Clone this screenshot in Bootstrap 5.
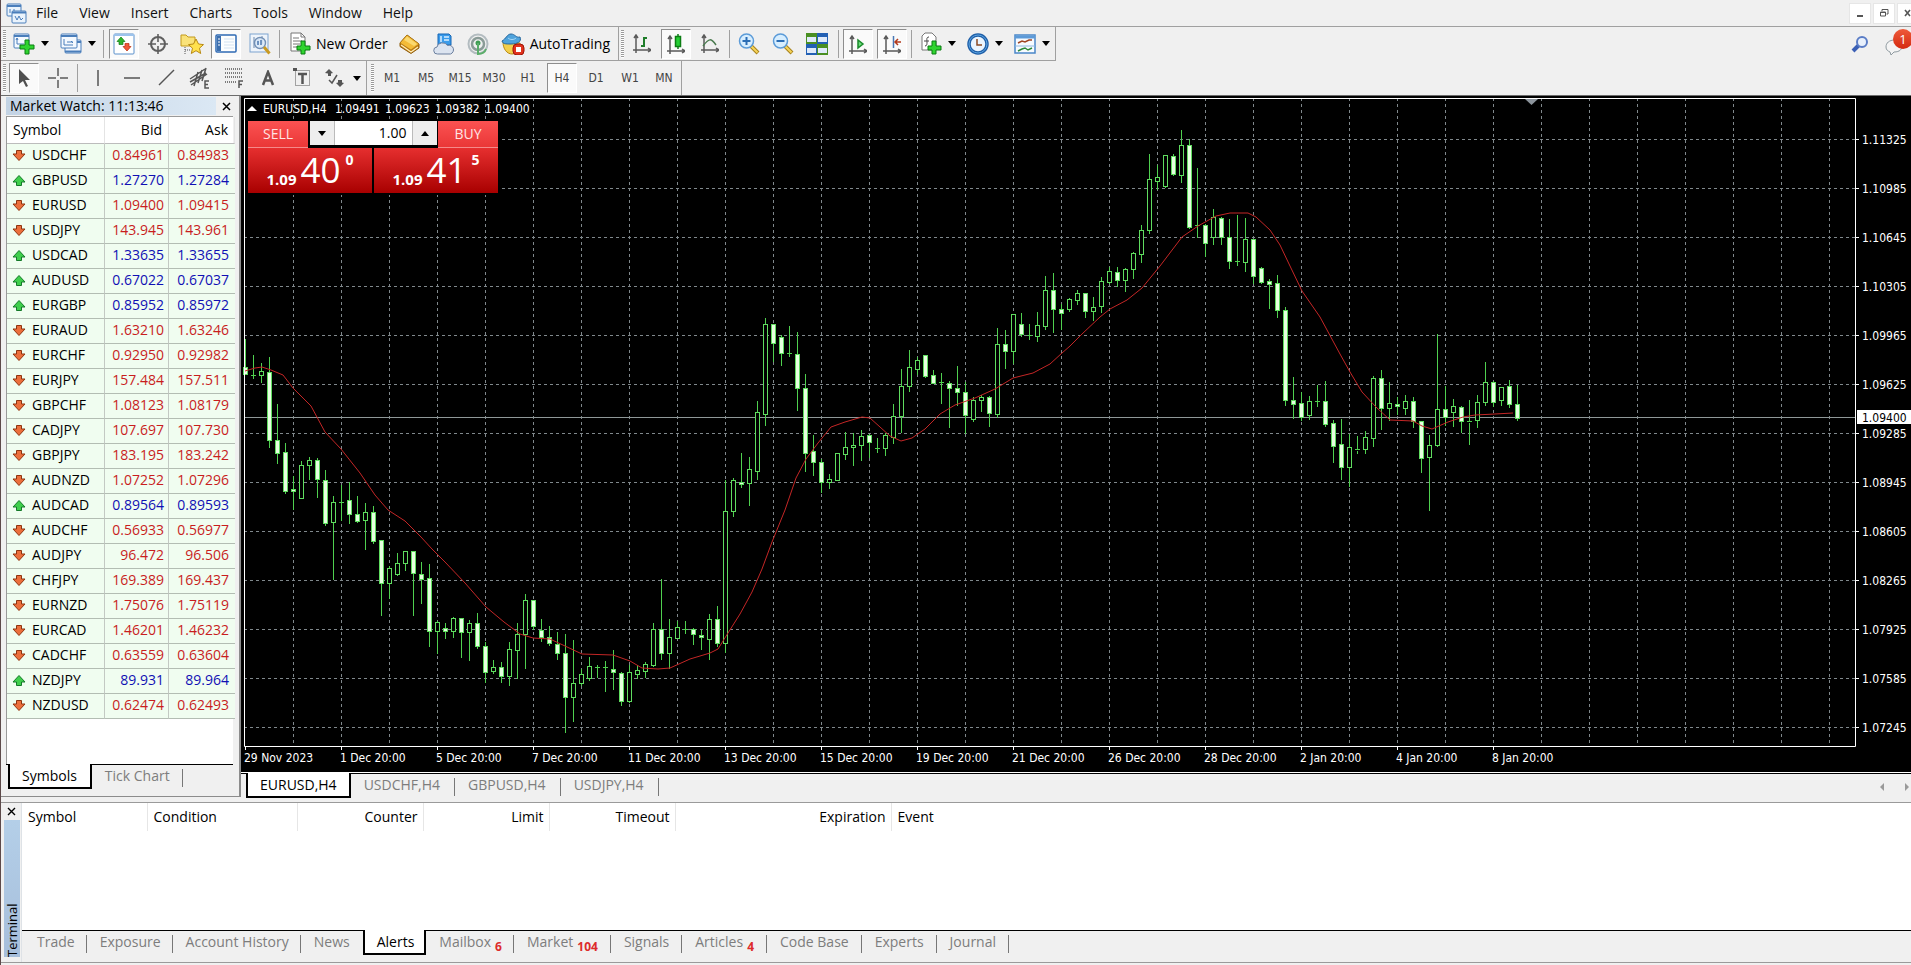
<!DOCTYPE html>
<html lang="en">
<head>
<meta charset="utf-8">
<meta name="viewport" content="width=device-width, initial-scale=1">
<title>EURUSD,H4</title>
<link href="https://cdn.jsdelivr.net/npm/bootstrap@5.3.0/dist/css/bootstrap.min.css" rel="stylesheet">
<style>
  :root { --ui: "Open Sans", "Noto Sans", sans-serif; --tick: "DejaVu Sans Condensed", "Noto Sans", sans-serif; --face: #f0f0f0; --edge: #a0a0a0; }
  body { font: 14px/20px var(--ui); background: var(--face); color: #000; border-left: 1px solid #5d4a4a; overflow: hidden; }
  button, input { font-family: inherit; }
  button { border: 0; background: none; padding: 0; color: inherit; }
  svg { display: block; flex: none; }

  .menubar { height: 27px; border-bottom: 1px solid var(--edge); padding-left: 5px; }
  .menubar a { color: #111; text-decoration: none; margin-left: 21px; }
  .menubar a.first { margin-left: 8px; }
  .mdi button { width: 22px; height: 21px; background: #fff; margin-left: 2px; border: 1px solid #e6e6e6; }
  .mdi { margin-right: -8px; }

  .tools { height: 34px; }
  .strip { height: 34px; border-right: 1px solid var(--edge); border-bottom: 1px solid var(--edge); }
  .strip.open { border-bottom: 0; }
  .strip.main { padding-right: 5px; }
  .grip { width: 3px; height: 28px; margin: 0 1px 0 2px; background: repeating-linear-gradient(#9a9a9a 0 1px, #fff 1px 2px); }
  .tb { width: 30px; height: 30px; margin: 0 2px; display: flex; align-items: center; justify-content: center; flex: none; }
  .tb.on { background: #fafafa; border: 1px solid #fff; border-top-color: #8e8e8e; border-left-color: #8e8e8e; }
  .tb.drop { width: 43px; justify-content: space-between; padding: 0 3px 0 4px; }
  .tb.wide { width: auto; gap: 5px; padding: 0 1px 0 4px; font-size: 14px; }
  .tb.frame { font: 12px var(--tick); color: #444; }
  .caret { width: 0; border: 4px solid transparent; border-top: 5px solid #000; border-bottom: 0; }
  .bar { width: 1px; height: 28px; background: var(--edge); margin: 0 3px 0 2px; }
  .bar.slim { margin-right: 2px; }
  .notes { margin-right: -2px; }
  .bell { width: 28px; height: 30px; position: relative; }
  .bell span { position: absolute; right: 0; top: 0; width: 20px; height: 20px; border-radius: 50%; background: linear-gradient(#ee5a3a, #d42a10); color: #fff; font-size: 13px; line-height: 20px; }

  .work { border-top: 1px solid #6c6c6c; }
  .watch { width: 240px; flex: none; padding: 1px 6px 0 5px; border-right: 2px solid #8c8c8c; border-bottom: 1px solid #8c8c8c; }
  .watch-title { height: 19px; line-height: 17px; margin-right: -5px; }
  .watch-title span { background: linear-gradient(90deg, #c3d3e4, #dbe8f4); padding-left: 4px; height: 18px; }
  .watch-title button { width: 22px; }
  .box { background: #fff; border-left: 1px solid #9a9a9a; border-top: 1px solid #9a9a9a; }
  .quotes { table-layout: fixed; width: 228px; border-collapse: separate; border-spacing: 0; }
  .quotes th { font-weight: 400; height: 27px; padding: 0 6px; border-right: 1px solid #e4e4e4; border-bottom: 1px solid #bcbcbc; line-height: 20px; }
  .quotes td { height: 25px; line-height: 20px; padding: 0 4px 3px; border-right: 1px solid #c3c9c3; border-bottom: 1px solid #b3bdb3; background: #f0fdf0; }
  .quotes td.num, .quotes th.num { text-align: right; }
  .quotes td:last-child { padding-right: 6px; border-right: 0; }
  .quotes .pair { display: flex; align-items: center; gap: 6px; padding-left: 1px; height: 21px; }
  .down { color: #c81e1e; } .up { color: #1010b4; }

  .tabs { display: flex; border-top: 1px solid #000; height: 24px; padding-left: 5px; color: #7d7d7d; }
  .tabs.in { padding-left: 2px; }
  .tabs button { padding: 0 12px 1px 13px; position: relative; height: 23px; white-space: nowrap; }
  .tabs button::after { content: ""; position: absolute; right: 0; top: 4px; height: 18px; border-right: 1px solid #777; }
  .tabs button.on { color: #000; background: #fff; border: 0 solid #000; border-width: 0 2px 2px; margin-top: -1px; padding-bottom: 0; height: 25px; padding-left: 12px; }
  .tabs button.on::after, .tabs button.prev::after { display: none; }
  .tabs b { color: #dd2b2b; font-size: 12px; position: relative; top: 4px; margin-left: 4px; }
  .charts-row button:not(.on) { padding-right: 15px; }
  .term-row button:nth-child(n+7), .term-row button.prev, .watch .tabs button { padding-right: 13px; }
  .term-row button.on { padding-right: 10px; }

  .chart-pane { background: #000; min-width: 0; }
  .chart-pane > svg { width: 100%; height: 100%; }
  .chart-pane text { font: 12px var(--tick); fill: #fff; }
  .trade { position: absolute; left: 7px; top: 25px; width: 250px; color: #fff; }
  .trade button.side { width: 60px; height: 27px; background: linear-gradient(#fb5252, #ea3737); color: #ffe4e4; border-bottom: 1px solid #f58a8a; }
  .spin { width: 127px; height: 24px; background: #eee; }
  .spin button { width: 24px; display: flex; align-items: center; justify-content: center; }
  .spin input { width: 79px; border: 0; border-left: 1px solid #bbb; border-right: 1px solid #bbb; text-align: right; padding: 0 5px; line-height: 24px; outline: 0; }
  .caret.rise { transform: rotate(180deg); }
  .price { width: 124px; height: 45px; background: linear-gradient(#e62f2f, #a80000); display: flex; justify-content: center; align-items: flex-end; gap: 4px; padding-bottom: 4px; }
  .price b { font-size: 15px; line-height: 20px; }
  .price span { font-size: 35px; line-height: 38px; }
  .price b.pip { align-self: flex-start; font-size: 14px; line-height: 24px; margin-left: 1px; }

  .foot-tabs { background: var(--face); border-top: 1px solid #fff; }
  .terminal { border-top: 1px solid #9a9a9a; margin-top: 5px; }
  .side-title { width: 20px; background: var(--face); padding: 0 1px 5px 3px; flex: none; }
  .side-title button { height: 17px; line-height: 12px; }
  .side-title div { background: linear-gradient(#a6bedb, #b4cfe8); writing-mode: vertical-rl; transform: rotate(180deg); font-size: 13px; line-height: 16px; }
  .alerts { table-layout: fixed; width: 100%; }
  .alerts th { font-weight: 400; height: 28px; padding: 0 5px 0 6px; border-right: 1px solid #e6e6e6; }
  .alerts th:last-child { border: 0; }
  .term-body { height: 127px; }
  .term-row { background: var(--face); height: 32px; }
  .status { height: 3px; border-top: 1px solid #9a9a9a; }
</style>
</head>
<body class="vh-100 d-flex flex-column">

<nav class="menubar d-flex align-items-center">
  <svg width="22" height="22" viewBox="0 0 22 22" fill="#eaf3fc" stroke="#4a7ebb"><rect x="1" y="2" width="14" height="12" rx="1"/><path d="M1 4h14" stroke-width="2"/><path d="M4 7v4M8 7v3" /><rect x="6" y="9" width="14" height="12" rx="1"/><path d="M6 10.500h14" stroke-width="2"/><path d="M9 14l2 4 2-4 2 4 2-2" fill="none"/></svg>
  <a class="first" href="#">File</a><a href="#">View</a><a href="#">Insert</a><a href="#">Charts</a><a href="#">Tools</a><a href="#">Window</a><a href="#">Help</a>
  <div class="mdi d-flex ms-auto">
    <button aria-label="Minimize"><svg class="mx-auto" width="12" height="12"><path d="M3 9h6" stroke="#555" stroke-width="2"/></svg></button>
    <button aria-label="Restore"><svg class="mx-auto" width="12" height="12" fill="none" stroke="#555"><path d="M4 4V2.500h6V7H8.500M2.500 5h5v4h-5zM2 5.500h6"/></svg></button>
    <button aria-label="Close"><svg class="mx-auto" width="12" height="12"><path d="M3 3l5 6M8 3l-5 6" stroke="#555" stroke-width="1.600"/></svg></button>
  </div>
</nav>

<div class="tools d-flex">
  <div class="strip main d-flex align-items-center">
    <div class="grip"></div>
    <button class="tb drop" aria-label="New chart"><svg width="22" height="22" viewBox="0 0 22 22"><rect x="1" y="1" width="15" height="14" rx="1" fill="#f4f9ff" stroke="#4a7ebb"/><path d="M1 3h15" stroke="#4a7ebb" stroke-width="2"/><path d="M4 5v6h7M3 7l1-2 1 2" fill="none" stroke="#4a7ebb"/><path d="M12 7h4v5h5v4h-5v5h-4v-5H7v-4h5z" fill="#2fd42f" stroke="#0b7d12"/></svg><i class="caret"></i></button>
    <button class="tb drop" aria-label="Profiles"><svg width="22" height="22" viewBox="0 0 22 22" fill="#f4f9ff" stroke="#4a7ebb"><rect x="5" y="7" width="16" height="13" rx="1"/><path d="M5 9h16M5 18.500h16" stroke-width="2"/><rect x="1" y="1" width="16" height="14" rx="1"/><path d="M1 3h16" stroke-width="2"/><path d="M4 6v6h9M11 8l2 2M7 9h6" fill="none"/></svg><i class="caret"></i></button>
    <div class="bar"></div>
    <button class="tb on" aria-label="Market Watch"><svg width="22" height="22" viewBox="0 0 22 22"><rect x="1" y="1" width="20" height="20" rx="1" fill="#fff" stroke="#5b90cb"/><path d="M1 2h20" stroke="#9cc3ec" stroke-width="2"/><path d="M8 4l4 4.500-2 0v3H6v-3H4z" fill="#2fb52f" stroke="#127d12" stroke-width=".7"/><path d="M14 18l-4-4.500h2v-3h4v3h2z" fill="#f05a38" stroke="#b8290c" stroke-width=".7"/></svg></button>
    <button class="tb" aria-label="Data Window"><svg width="20" height="20" viewBox="0 0 20 20" fill="none" stroke="#5f5f5f" stroke-width="2"><circle cx="10" cy="10" r="7"/><path d="M10 0v8M10 12v8M0 10h8M12 10h8" stroke-width="1.600"/></svg></button>
    <button class="tb" aria-label="Navigator"><svg width="24" height="22" viewBox="0 0 24 22"><path d="M1 2h5l2 2h7v9H1z" fill="#f9e27a" stroke="#c39a1d"/><path d="M5 14v7M5 17h5" stroke="#555" stroke-dasharray="1 1"/><path d="M16 6l2.500 5 5 .600-4 3.600 1.200 5.300-4.700-2.800-4.700 2.800 1.200-5.300-4-3.600 5-.600z" fill="#ffe14d" stroke="#b98a14"/></svg></button>
    <button class="tb on" aria-label="Terminal"><svg width="22" height="20" viewBox="0 0 22 20"><rect x="1" y="1" width="20" height="17" rx="1" fill="#fdfefe" stroke="#2e69b4" stroke-width="1.500"/><path d="M2 2h4v15H2z" fill="#3c6fae"/><path d="M9 5h10M9 8h10M9 11h10M9 14h10" stroke="#d3e2f1"/><path d="M3 5h2M3 8h2M3 11h2" stroke="#fff"/></svg></button>
    <button class="tb" aria-label="Strategy Tester"><svg width="22" height="22" viewBox="0 0 22 22"><rect x="1" y="1" width="18" height="18" fill="#eef4fb" stroke="#7da3cf"/><path d="M5 4v11M13 3v8M9 6v4" stroke="#6a88ad"/><circle cx="11" cy="10" r="5.500" fill="#d8e9f9" fill-opacity=".8" stroke="#7390b5" stroke-width="1.400"/><path d="M9 8v4M12 7v5" stroke="#4d78b0" stroke-width="1.500"/><path d="M15 14l5.500 6.500" stroke="#c99a22" stroke-width="3"/></svg></button>
    <div class="bar"></div>
    <button class="tb wide"><svg width="22" height="23" viewBox="0 0 22 23"><path d="M2 1h10l4 4v14H2z" fill="#fff" stroke="#777"/><path d="M12 1v4h4M4 6h6M4 9h9M4 12h7M4 15h6" fill="none" stroke="#777"/><path d="M12 9h4v5h5v4h-5v4h-4v-4H8v-4h4z" fill="#2fd42f" stroke="#0b7d12"/></svg>New Order</button>
    <button class="tb ms-1" aria-label="MetaEditor"><svg width="22" height="20" viewBox="0 0 22 20"><path d="M8 1l12 9v4l-8 5.500L1 12.500V9z" fill="#c07c12" stroke="#8f5c0b"/><path d="M8 1l12 9-8 6L1 9z" fill="#f3bb38" stroke="#a36d10" stroke-width=".6"/><path d="M2 11l10 7 7-5" fill="none" stroke="#fff0bd" stroke-width="1.200"/><path d="M8 2.500l10 7.500-3 2L5 6z" fill="#fbd970"/></svg></button>
    <button class="tb" aria-label="Virtual Hosting"><svg width="22" height="22" viewBox="0 0 22 22"><path d="M5 1h11l2 2v9H5z" fill="#3a9bea" stroke="#1667b5"/><path d="M8 3v6M11 4h5M11 7h5" stroke="#d9eeff" stroke-width="1.500"/><path d="M4.500 21a3.500 3.500 0 01-.5-7 5.500 4.500 0 0110.500-1.500 4.200 4.200 0 013 8.500z" fill="#dce4f0" stroke="#6b7f9e"/></svg></button>
    <button class="tb" aria-label="Signals"><svg width="22" height="22" viewBox="0 0 22 22" fill="none"><circle cx="11" cy="11" r="9.500" stroke="#b3bcc0" stroke-width="2"/><circle cx="11" cy="11" r="6" stroke="#8a9b97" stroke-width="2.500"/><circle cx="11" cy="10" r="2.500" fill="#3f9c52"/><path d="M11 10v11c4 0 7-2 8-5" stroke="#5aae69" stroke-width="2"/></svg></button>
    <button class="tb wide"><svg width="24" height="22" viewBox="0 0 24 22"><path d="M2 9c0 7 4 12 9 12 4 0 8-4 8-11z" fill="#f3cf4c" stroke="#b98a14"/><path d="M1 8c4-2 5-7 9-7s5 4 9 3c2 5-3 7-9 7S2 11 1 8z" fill="#4fa3dc" stroke="#27679d"/><path d="M7 5c2 2 6 2 8 0" stroke="#a9d8f5" fill="none"/><rect x="12" y="11" width="11" height="11" rx="4" fill="#e2321d" stroke="#9d1608"/><rect x="15" y="14" width="5" height="5" fill="#fff"/></svg>AutoTrading</button>
  </div>
  <div class="strip d-flex align-items-center">
    <div class="grip"></div>
    <button class="tb" aria-label="Bar Chart"><svg width="18" height="20" viewBox="0 0 18 20" fill="none" stroke="#5a5a5a" stroke-width="1.500"><path d="M3 2v17M0 16h17M1 4l2-3 2 3M15 14l3 2-3 2"/><path d="M11 3v10M11 4h3M8 12h3" stroke="#1f7d2a" stroke-width="2"/></svg></button>
    <button class="tb on" aria-label="Candlesticks"><svg width="18" height="20" viewBox="0 0 18 20" fill="none" stroke="#5a5a5a" stroke-width="1.500"><path d="M3 3v17M0 17h17M1 5l2-3 2 3M15 15l3 2-3 2"/><path d="M11 0v15" stroke="#0c7d14"/><rect x="8.500" y="2.500" width="5" height="10" fill="#24cf33" stroke="#0c7d14"/></svg></button>
    <button class="tb" aria-label="Line Chart"><svg width="18" height="20" viewBox="0 0 18 20" fill="none" stroke="#5a5a5a" stroke-width="1.500"><path d="M3 2v17M0 16h17M1 4l2-3 2 3M15 14l3 2-3 2"/><path d="M2 12c6-8 8-8 13-1" stroke="#4a7a4f"/></svg></button>
    <div class="bar slim"></div>
    <button class="tb" aria-label="Zoom In"><svg width="22" height="22" viewBox="0 0 22 22"><path d="M13 13l7 7" stroke="#a8831c" stroke-width="4"/><path d="M13 13l6.500 6.500" stroke="#f7d55a" stroke-width="2"/><circle cx="8.500" cy="8" r="7" fill="#d7eeff" stroke="#5b9bd8" stroke-width="1.500"/><path d="M4.500 8h8M8.500 4v8" stroke="#2a6db5" stroke-width="2"/></svg></button>
    <button class="tb" aria-label="Zoom Out"><svg width="22" height="22" viewBox="0 0 22 22"><path d="M13 13l7 7" stroke="#a8831c" stroke-width="4"/><path d="M13 13l6.500 6.500" stroke="#f7d55a" stroke-width="2"/><circle cx="8.500" cy="8" r="7" fill="#d7eeff" stroke="#5b9bd8" stroke-width="1.500"/><path d="M4.500 8h8" stroke="#2a6db5" stroke-width="2"/></svg></button>
    <button class="tb" aria-label="Tile Windows"><svg width="22" height="22" viewBox="0 0 22 22"><path d="M0 0h11v11H0zM11 11h11v11H11z" fill="#4a8f22"/><path d="M11 0h11v11H11zM0 11h11v11H0z" fill="#2260b4"/><path d="M1 4h9v5H1zM12 4h9v5h-9zM1 15h9v5H1zM12 15h9v5h-9z" fill="#dfeafa"/></svg></button>
    <div class="bar slim ms-1"></div>
    <button class="tb on" aria-label="Auto Scroll"><svg width="18" height="20" viewBox="0 0 18 20" fill="none" stroke="#5a5a5a" stroke-width="1.500"><path d="M3 3v17M0 17h17M1 5l2-3 2 3M15 15l3 2-3 2"/><path d="M9 6v8l5-4z" fill="#6fe07c" stroke="#1a8a2b"/></svg></button>
    <button class="tb on" aria-label="Chart Shift"><svg width="18" height="20" viewBox="0 0 18 20" fill="none" stroke="#5a5a5a" stroke-width="1.500"><path d="M3 3v17M0 17h17M1 5l2-3 2 3M15 15l3 2-3 2"/><path d="M10.500 2v12" stroke="#4a78b5"/><path d="M18 8h-5M15 5l-3 3 3 3" stroke="#b33a1c"/></svg></button>
    <div class="bar slim"></div>
    <button class="tb drop" aria-label="Indicators"><svg width="22" height="23" viewBox="0 0 22 23"><path d="M5 1h7l4 4v13H2V4z" fill="#fff" stroke="#777"/><path d="M9 5c-3 0-2 3-2 5s0 4-2 4M4 9h5" fill="none" stroke="#444"/><path d="M12 9h4v5h5v4h-5v4h-4v-4H8v-4h4z" fill="#2fd42f" stroke="#0b7d12"/></svg><i class="caret"></i></button>
    <button class="tb drop" aria-label="Periods"><svg width="22" height="22" viewBox="0 0 22 22"><circle cx="11" cy="11" r="9" fill="#eaf5ff" stroke="#1f5fa8" stroke-width="3.500"/><circle cx="11" cy="11" r="9" fill="none" stroke="#5ea5e2"/><path d="M10 6v6h5" fill="none" stroke="#8b4a24" stroke-width="1.500"/></svg><i class="caret"></i></button>
    <button class="tb drop" aria-label="Templates"><svg width="22" height="20" viewBox="0 0 22 20"><rect x="1" y="1" width="20" height="18" fill="#f7fbff" stroke="#4a86c8" stroke-width="1.500"/><path d="M1 3h20" stroke="#5c9ad8" stroke-width="3"/><path d="M1 12h20" stroke="#8fb8e2"/><path d="M4 9l4-2 3 1 4-2h3" fill="none" stroke="#a04524" stroke-width="1.500"/><path d="M4 17l4-2 3-1 3 2 4-2" fill="none" stroke="#2c8a3a" stroke-width="1.500"/></svg><i class="caret"></i></button>
  </div>
  <div class="notes d-flex align-items-center ms-auto gap-3">
    <button aria-label="Search"><svg width="18" height="18" viewBox="0 0 18 18" fill="none"><path d="M2 16l6-6" stroke="#3b5fb5" stroke-width="4"/><circle cx="11" cy="7" r="5" stroke="#5a7cc6" stroke-width="2" fill="#e8f0fc"/></svg></button>
    <button class="bell" aria-label="Messages"><svg width="26" height="30" viewBox="0 0 26 30"><path d="M10 11c-6 0-9 3-9 7 0 3 2 4 4 5l1 3 3-3c6 0 8-3 8-6" fill="#f4f4f4" stroke="#8f9aa0"/></svg><span>1</span></button>
  </div>
</div>

<div class="tools d-flex">
  <div class="strip open d-flex align-items-center">
    <div class="grip"></div>
    <button class="tb on" aria-label="Cursor"><svg width="14" height="20" viewBox="0 0 14 20"><path d="M2 1v15l4-3 3 6 2-1-3-6h5z" fill="#4f4f4f"/></svg></button>
    <button class="tb" aria-label="Crosshair"><svg width="20" height="20" stroke="#5a5a5a" stroke-width="1.500"><path d="M10 0v8M10 12v8M0 10h8M12 10h8"/></svg></button>
    <div class="bar"></div>
    <button class="tb" aria-label="Vertical Line"><svg width="20" height="20" stroke="#555" stroke-width="1.500"><path d="M10 2v16"/></svg></button>
    <button class="tb" aria-label="Horizontal Line"><svg width="20" height="20" stroke="#555" stroke-width="1.500"><path d="M2 10h16"/></svg></button>
    <button class="tb" aria-label="Trendline"><svg width="20" height="20" stroke="#555" stroke-width="1.500"><path d="M3 17L18 2"/></svg></button>
    <button class="tb" aria-label="Equidistant Channel"><svg width="22" height="22" viewBox="0 0 22 22" stroke="#555" stroke-width="1.500" fill="none"><path d="M1 12L16 2M2 18L18 7M5 19L9 5M9 16l4-13M13 14l4-13M1 15l16-9"/><path d="M20 14h-4v7h4M16 17.500h3"/></svg></button>
    <button class="tb" aria-label="Fibonacci Retracement"><svg width="20" height="22" viewBox="0 0 20 22" stroke="#555" fill="none"><path d="M1 2h17M1 6h17M1 10h17M1 15h12" stroke-dasharray="1 1" stroke-width="1.500"/><path d="M19 14h-4v7M15 17.500h3" stroke-width="1.500"/></svg></button>
    <button class="tb" aria-label="Text"><svg width="14" height="16" viewBox="0 0 14 16" fill="none" stroke="#555" stroke-width="2.500"><path d="M2 15L7 2l5 13M4 10.500h6"/></svg></button>
    <button class="tb" aria-label="Text Label"><svg width="20" height="20" viewBox="0 0 20 20" fill="none" stroke="#555"><rect x="3.500" y="2.500" width="14" height="15" stroke-dasharray="1 1"/><path d="M6 6h9M10.500 6v10" stroke-width="2.500"/><path d="M1 0h4v3H1z" fill="#555" stroke="none"/></svg></button>
    <button class="tb drop" aria-label="Arrows"><svg width="20" height="18" viewBox="0 0 20 18"><path d="M4 0l4 4-2 .500V7H3V4.500L0 4z" fill="#555"/><path d="M15 18l-4-4 2-.500V11h4v2.500l2 .500z" fill="#555"/><path d="M4 11l3 3 5-8" fill="none" stroke="#555" stroke-width="1.500"/></svg><i class="caret"></i></button>
  </div>
  <div class="strip open d-flex align-items-center">
    <div class="grip ms-1"></div>
    <button class="tb frame">M1</button><button class="tb frame">M5</button><button class="tb frame">M15</button><button class="tb frame">M30</button><button class="tb frame">H1</button><button class="tb frame on">H4</button><button class="tb frame">D1</button><button class="tb frame">W1</button><button class="tb frame">MN</button>
  </div>
</div>

<main class="work d-flex flex-grow-1">
  <aside class="watch d-flex flex-column">
    <div class="watch-title d-flex"><span class="flex-grow-1">Market Watch: 11:13:46</span><button aria-label="Close Market Watch"><svg class="mx-auto" width="10" height="10"><path d="M1 1l7 7M8 1L1 8" stroke="#000" stroke-width="1.500"/></svg></button></div>
    <div class="box flex-grow-1">
      <table class="quotes">
        <colgroup><col style="width:98px"><col style="width:64px"><col></colgroup>
        <thead><tr><th>Symbol</th><th class="num">Bid</th><th class="num">Ask</th></tr></thead>
        <tbody id="quotes"></tbody>
      </table>
    </div>
    <div class="tabs in mb-2"><button class="on">Symbols</button><button>Tick Chart</button></div>
  </aside>

  <section class="flex-grow-1 d-flex flex-column" style="min-width:0">
    <div class="chart-pane position-relative flex-grow-1">
      <svg id="chart" role="img" aria-label="EURUSD four-hour candlestick chart"></svg>
      <div class="trade">
        <div class="d-flex justify-content-between align-items-start position-relative">
          <button class="side">SELL</button>
          <div class="spin d-flex"><button aria-label="Less volume"><i class="caret"></i></button><input aria-label="Volume" value="1.00"><button aria-label="More volume"><i class="caret rise"></i></button></div>
          <button class="side">BUY</button>
        </div>
        <div class="d-flex justify-content-between">
          <button class="price"><b>1.09</b><span>40</span><b class="pip">0</b></button>
          <button class="price"><b>1.09</b><span>41</span><b class="pip">5</b></button>
        </div>
      </div>
    </div>
    <div class="foot-tabs"><div class="tabs charts-row"><button class="on">EURUSD,H4</button><button>USDCHF,H4</button><button>GBPUSD,H4</button><button>USDJPY,H4</button>
      <svg class="ms-auto mt-2" width="34" height="10" fill="#9a9a9a"><path d="M7 1v8L3 5zM28 1v8l4-4z"/></svg></div></div>
  </section>
</main>

<section class="terminal d-flex bg-white">
  <div class="side-title d-flex flex-column"><button aria-label="Close Terminal"><svg class="mx-auto" width="10" height="10"><path d="M1 1l7 7M8 1L1 8" stroke="#000" stroke-width="1.400"/></svg></button><div class="flex-grow-1">Terminal</div></div>
  <div class="flex-grow-1 border-start">
    <div class="term-body">
      <table class="alerts">
        <colgroup><col style="width:125px"><col style="width:150px"><col style="width:126px"><col style="width:126px"><col style="width:126px"><col style="width:216px"><col></colgroup>
        <thead><tr><th>Symbol</th><th>Condition</th><th class="text-end">Counter</th><th class="text-end">Limit</th><th class="text-end">Timeout</th><th class="text-end">Expiration</th><th>Event</th></tr></thead>
      </table>
    </div>
    <div class="term-row"><div class="tabs in"><button>Trade</button><button>Exposure</button><button>Account History</button><button class="prev">News</button><button class="on">Alerts</button><button>Mailbox<b>6</b></button><button>Market<b>104</b></button><button>Signals</button><button>Articles<b>4</b></button><button>Code Base</button><button>Experts</button><button>Journal</button></div></div>
  </div>
</section>
<div class="status"></div>

<script src="https://cdn.jsdelivr.net/npm/bootstrap@5.3.0/dist/js/bootstrap.bundle.min.js"></script>
<script>
const quotes = `USDCHF 0.84961 0.84983 d
GBPUSD 1.27270 1.27284 u
EURUSD 1.09400 1.09415 d
USDJPY 143.945 143.961 d
USDCAD 1.33635 1.33655 u
AUDUSD 0.67022 0.67037 u
EURGBP 0.85952 0.85972 u
EURAUD 1.63210 1.63246 d
EURCHF 0.92950 0.92982 d
EURJPY 157.484 157.511 d
GBPCHF 1.08123 1.08179 d
CADJPY 107.697 107.730 d
GBPJPY 183.195 183.242 d
AUDNZD 1.07252 1.07296 d
AUDCAD 0.89564 0.89593 u
AUDCHF 0.56933 0.56977 d
AUDJPY 96.472 96.506 d
CHFJPY 169.389 169.437 d
EURNZD 1.75076 1.75119 d
EURCAD 1.46201 1.46232 d
CADCHF 0.63559 0.63604 d
NZDJPY 89.931 89.964 u
NZDUSD 0.62474 0.62493 d`;
const arrow = {
  d: '<svg width="14" height="14" viewBox="0 0 14 14"><path d="M4.500 2.500h5V6h3.500L7 12.500 1 6h3.500z" fill="#ec6f3c" stroke="#8f3410"/></svg>',
  u: '<svg width="14" height="14" viewBox="0 0 14 14"><path d="M4.500 12.500h5V9h3.500L7 2.500 1 9h3.500z" fill="#3fcf4c" stroke="#14792a"/></svg>'
};
document.getElementById('quotes').innerHTML = quotes.split('\n').map(q => {
  const [s, bid, ask, dir] = q.split(' '), c = dir === 'u' ? 'up' : 'down';
  return `<tr><td><div class="pair">${arrow[dir]}${s}</div></td><td class="num ${c}">${bid}</td><td class="num ${c}">${ask}</td></tr>`;
}).join('');

// Each candle: high, body top, body bottom, low, kind (f = bearish, h = bullish, d = doji).
const candles = `339,367,374,374f 355,375,375,378d 363,371,375,382h 357,372,440,447f 404,440,453,463f 443,452,491,493f 476,489,491,509f 461,465,498,498h 457,460,465,479h 458,460,479,497f
470,480,523,525f 496,502,522,579h 485,502,502,520d 482,500,514,523f 496,514,521,522f 503,512,520,549h 506,512,541,543f 540,540,583,615f 566,568,583,598h 553,563,574,575h
551,551,563,570h 551,551,573,615f 562,574,579,603f 564,578,631,646f 621,622,631,653h 623,628,631,638f 617,618,631,637h 618,618,632,657f 620,623,632,660h 613,623,646,648f
642,646,672,682f 660,667,671,673h 662,667,676,682f 642,649,676,685h 623,634,650,678h 594,600,634,668h 600,600,626,629f 619,630,637,641f 626,637,643,645f 632,644,653,659f
634,653,697,732f 640,683,697,721h 669,674,683,685h 657,666,678,680h 665,667,667,677d 661,667,667,691d 650,669,672,689f 672,673,701,705f 665,672,701,702h 665,670,674,678h
662,664,671,677h 623,629,665,666h 579,629,653,659f 619,637,653,668h 621,627,638,638h 621,629,629,633d 628,629,634,644f 630,635,637,649f 614,619,639,659h 606,619,643,646f
480,511,643,652h 478,480,511,516h 453,482,484,487f 457,469,483,505h 401,412,471,479h 318,324,414,425h 324,324,343,361f 335,337,353,365f 326,353,354,356d 332,354,388,410f
374,388,453,471f 435,451,462,475f 459,462,482,492f 474,479,482,488h 453,453,480,480h 432,447,454,459h 433,445,447,465h 430,436,445,460h 434,435,442,457f 438,448,448,452d
433,435,448,455h 404,416,437,443h 369,386,416,432h 350,367,386,391h 357,360,369,374h 355,355,376,377f 370,375,383,383f 373,382,383,403d 381,383,388,427f 366,388,392,405f
382,392,415,433f 397,400,419,421h 395,397,400,411h 396,397,413,426f 328,344,414,417h 330,344,351,368f 314,314,351,363h 313,324,334,336f 324,335,336,339d 312,325,336,341h
276,290,326,329h 273,290,309,332f 304,309,313,329f 298,299,309,311h 290,293,300,304h 293,293,311,317f 297,307,311,320h 277,281,306,312h 267,271,282,283h 267,272,280,286f
268,269,280,291h 252,253,269,278h 225,230,254,262h 154,179,230,233h 165,177,181,189h 155,155,186,187h 154,156,174,175f 130,145,175,182h 139,145,227,228f 168,225,225,237d
224,225,243,256f 209,217,237,244h 217,218,237,244f 219,237,261,268f 215,261,261,265d 218,239,262,271h 239,239,276,283f 267,268,282,283f 279,281,284,308f 275,283,310,317f
307,310,400,405f 377,400,404,418f 392,403,417,420f 396,401,415,419h 385,401,401,406d 381,401,424,426f 420,423,446,462f 419,444,467,479f 434,447,467,486h 436,449,451,453d
431,437,449,453h 376,378,438,446h 370,378,408,429f 382,403,408,420h 397,404,406,414f 395,401,408,414h 397,401,421,427f 421,421,458,472f 435,445,457,510h 334,409,445,446h
386,409,417,425f 399,406,412,426h 406,407,421,432f 400,421,423,444d 395,402,420,427h 362,382,402,405h 381,382,402,406f 387,387,400,405h 380,386,404,407f 385,404,418,420f`
  .split(/\s+/).map(c => [...c.slice(0, -1).split(',').map(Number), c.slice(-1)]);
const average = '245,371 255,368 262,367 271,370 283,375 293,388 311,406 325,432 341,449 360,473 375,495 388,510 405,521 421,537 432,549 445,562 465,583 486,607 504,622 520,634 533,638 550,639 565,646 582,654 613,655 630,661 642,668 658,669 670,668 690,659 710,653 718,649 728,633 740,614 752,592 762,569 772,542 785,510 796,478 806,459 818,443 831,427 845,422 862,417 870,418 880,427 890,436 901,441 912,438 925,429 940,414 955,405 975,398 995,389 1013,378 1033,373 1050,364 1062,353 1070,346 1082,334 1100,317 1110,309 1127,300 1142,288 1160,266 1182,237 1198,226 1216,216 1230,213 1248,213 1256,217 1270,230 1280,245 1290,266 1302,291 1320,317 1340,354 1350,372 1362,392 1376,407 1390,420 1413,421 1422,426 1432,429 1448,422 1463,417 1475,415 1495,414 1513,413'
  .split(' ').map(p => p.split(',').map(Number));
const times = ['29 Nov 2023', '1 Dec 20:00', '5 Dec 20:00', '7 Dec 20:00', '11 Dec 20:00', '13 Dec 20:00', '15 Dec 20:00', '19 Dec 20:00', '21 Dec 20:00', '26 Dec 20:00', '28 Dec 20:00', '2 Jan 20:00', '4 Jan 20:00', '8 Jan 20:00'];

function draw() {
  const svg = document.getElementById('chart'), W = svg.clientWidth, H = svg.clientHeight;
  const top = 2, bottom = H - 26, right = W - 56, left = 3, k = (bottom - top) / 648;
  const Y = v => Math.round(top + (v - 98) * k), X = v => v - 242 + 1;
  const dash = 'stroke="#80888c" stroke-dasharray="3 3"';
  let o = '';
  for (let x = 52; x < right; x += 48) o += `<path d="M${x}.500 ${top}V${bottom}" ${dash}/>`;
  for (let i = 0; i < 13; i++) {
    const y = Y(139 + 49 * i);
    o += `<path d="M${left} ${y}.500H${right}" ${dash}/><path d="M${right} ${y}.500h4" stroke="#fff"/>
      <text x="${right + 7}" y="${y + 5}">${(1.11325 - i * .0034).toFixed(5)}</text>`;
  }
  const py = Y(417);
  o += `<path d="M${left} ${py}.500H${right}" stroke="#8f9898"/>`;
  candles.forEach(([h, t, b, l, kind], i) => {
    const x = 4 + i * 8, hi = Y(h), bt = Y(t), bb = Y(b), lo = Y(l);
    o += `<path d="M${x}.500 ${hi}V${bt}M${x}.500 ${bb}V${lo + 1}" stroke="#4fd04f"/>`;
    if (kind === 'd') o += `<path d="M${x - 2} ${bt}.500h5" stroke="#4fd04f"/>`;
    else o += `<rect x="${x - 2}.500" y="${bt}.500" width="4" height="${Math.max(1, bb - bt)}" fill="${kind === 'f' ? '#e6ffe0' : '#000'}" stroke="#5fdc5f"/>`;
  });
  o += `<polyline points="${average.map(([x, y]) => X(x) + ',' + Y(y)).join(' ')}" fill="none" stroke="#c42626"/>`;
  o += `<path d="M${left}.500 ${top}.500H${right}.500V${bottom}.500H${left}.500z" fill="none" stroke="#fff"/>`;
  times.forEach((t, i) => o += `<path d="M${4 + 96 * i}.500 ${bottom}v4" stroke="#fff"/><text x="${3 + 96 * i}" y="${bottom + 16}">${t}</text>`);
  o += `<rect x="${right + 2}" y="${py - 7}" width="54" height="14" fill="#fff"/><text x="${right + 7}" y="${py + 5}" style="fill:#000">1.09400</text>`;
  o += `<path d="M1284 3h13l-6.500 6z" fill="#8c949c"/>`;
  o += `<rect x="${left + 1}" y="${top + 22}" width="257" height="75" fill="#000"/><path d="M6 15l5-5 5 5z" fill="#fff"/><text x="22" y="17">EURUSD,H4</text>`;
  ['1.09491', '1.09623', '1.09382', '1.09400'].forEach((p, i) => o += `<text x="${94 + 50 * i}" y="17">${p}</text>`);
  svg.innerHTML = o;
}
draw();
addEventListener('resize', draw);
</script>
</body>
</html>
